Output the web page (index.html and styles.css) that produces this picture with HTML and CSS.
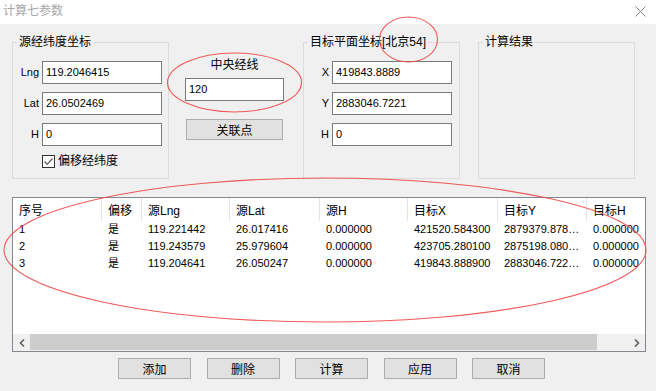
FILE: index.html
```html
<!DOCTYPE html>
<html lang="zh-CN">
<head>
  <meta charset="UTF-8" />
  <meta name="viewport" content="width=device-width, initial-scale=1.0" />
  <title>计算七参数</title>
  <link rel="stylesheet" href="styles.css">
</head>
<body>
  <div class="window">
    <div class="titlebar">
      <span class="title">计算七参数</span>
      <svg class="close" width="11" height="11" viewBox="0 0 11 11">
        <path d="M0.5 0.5 L10.5 10.5 M10.5 0.5 L0.5 10.5" stroke="#858585" stroke-width="1" fill="none" />
      </svg>
    </div>

    <div class="content">
      <div class="top">
        <fieldset class="group">
          <legend>源经纬度坐标</legend>
          <div class="form src">
            <label>Lng</label><input class="field" value="119.2046415" />
            <label>Lat</label><input class="field" value="26.0502469" />
            <label>H</label><input class="field" value="0" />
          </div>
          <div class="check">
            <span class="box">
              <svg width="11" height="11" viewBox="0 0 11 11">
                <path d="M1.5 5.5 L4.2 8.2 L9.5 2.5" stroke="#6a6a6a" stroke-width="1.4" fill="none" />
              </svg>
            </span>
            <span>偏移经纬度</span>
          </div>
        </fieldset>

        <div class="meridian">
          <div class="meridian-title">中央经线</div>
          <input class="field" value="120" />
          <button class="btn link">关联点</button>
        </div>

        <fieldset class="group dst-group">
          <legend>目标平面坐标[北京54]</legend>
          <div class="form dst">
            <label>X</label><input class="field" value="419843.8889" />
            <label>Y</label><input class="field" value="2883046.7221" />
            <label>H</label><input class="field" value="0" />
          </div>
        </fieldset>

        <fieldset class="group result-group">
          <legend>计算结果</legend>
        </fieldset>
      </div>

      <div class="list">
        <div class="list-body">
          <table>
            <colgroup>
              <col style="width:89px"><col style="width:40px"><col style="width:88px"><col style="width:90px">
              <col style="width:88px"><col style="width:90px"><col style="width:89px"><col style="width:90px">
            </colgroup>
            <thead>
              <tr>
                <th>序号</th><th>偏移</th><th>源Lng</th><th>源Lat</th>
                <th>源H</th><th>目标X</th><th>目标Y</th><th>目标H</th>
              </tr>
            </thead>
            <tbody id="rows"></tbody>
          </table>
        </div>
        <div class="hscroll">
          <span class="arrow">
            <svg width="6" height="8" viewBox="0 0 6 8"><path d="M5 0.5 L1.5 4 L5 7.5" stroke="#606060" stroke-width="1.6" fill="none" /></svg>
          </span>
          <span class="thumb"></span>
          <span class="track"></span>
          <span class="arrow">
            <svg width="6" height="8" viewBox="0 0 6 8"><path d="M1 0.5 L4.5 4 L1 7.5" stroke="#606060" stroke-width="1.6" fill="none" /></svg>
          </span>
        </div>
      </div>

      <div class="actions">
        <button class="btn">添加</button>
        <button class="btn">删除</button>
        <button class="btn">计算</button>
        <button class="btn">应用</button>
        <button class="btn">取消</button>
      </div>
    </div>

    <svg class="marks" width="656" height="391" viewBox="0 0 656 391">
      <ellipse cx="234.5" cy="82.5" rx="67" ry="29.5" />
      <ellipse cx="408.5" cy="39.5" rx="29" ry="22.5" />
      <ellipse cx="325" cy="250" rx="321" ry="72" />
    </svg>
  </div>

  <script>
    const points = [
      ["1", "是", "119.221442", "26.017416", "0.000000", "421520.584300", "2879379.878300", "0.000000"],
      ["2", "是", "119.243579", "25.979604", "0.000000", "423705.280100", "2875198.080300", "0.000000"],
      ["3", "是", "119.204641", "26.050247", "0.000000", "419843.888900", "2883046.722100", "0.000000"]
    ];

    const tbody = document.getElementById('rows');
    points.forEach(p => {
      const tr = document.createElement('tr');
      tr.innerHTML = p.map(v => `<td>${v}</td>`).join('');
      tbody.appendChild(tr);
    });
  </script>
</body>
</html>
```

FILE: styles.css
```css
* {
  box-sizing: border-box;
}
body {
  margin: 0;
  background: #f0f0f0;
  font-family: "Liberation Sans", "Noto Sans CJK SC", sans-serif;
  font-size: 12px;
  color: #000;
}
.window {
  position: relative;
  width: 656px;
  height: 391px;
  overflow: hidden;
  background: #f0f0f0;
}
.titlebar {
  height: 24px;
  background: #fff;
  display: flex;
  align-items: center;
  justify-content: space-between;
  padding: 0 10px 2px 3px;
}
.title {
  color: #a6a6a6;
  font-size: 12px;
  line-height: 16px;
}
.content {
  padding: 10px 12px 0 12px;
}
.top {
  display: flex;
  align-items: flex-start;
}
.group {
  margin: 0;
  padding: 0;
  min-width: 0;
  width: 157px;
  height: 145px;
  border: 1px solid #dcdcdc;
}
.group legend {
  margin-left: 4px;
  padding: 0 2px;
  font-size: 12px;
  line-height: 16px;
}
.form {
  display: grid;
  grid-template-columns: 26px 120px;
  column-gap: 3px;
  row-gap: 8px;
  margin-top: 11px;
}
.form.dst {
  grid-template-columns: 25px 120px;
}
.form label {
  text-align: right;
  font-size: 11px;
  line-height: 23px;
}
.field {
  width: 120px;
  height: 23px;
  margin: 0;
  padding: 0 3px 1px 3px;
  border: 1px solid #7a7a7a;
  background: #fff;
  font-family: "Liberation Sans", sans-serif;
  font-size: 11px;
  color: #000;
  outline: none;
}
.check {
  display: flex;
  align-items: center;
  margin: 9px 0 0 29px;
  line-height: 13px;
}
.box {
  width: 13px;
  height: 13px;
  border: 1px solid #333;
  background: #fff;
  margin-right: 3px;
  display: flex;
}
.meridian {
  width: 99px;
  margin-left: 16px;
  padding-top: 23px;
  display: flex;
  flex-direction: column;
}
.meridian-title {
  text-align: center;
  line-height: 16px;
}
.meridian .field {
  width: 99px;
  margin-top: 5px;
}
.btn {
  width: 73px;
  height: 21px;
  padding: 0;
  border: 1px solid #adadad;
  background: #e1e1e1;
  font-family: "Noto Sans CJK SC", sans-serif;
  font-size: 12px;
  line-height: 18px;
  color: #000;
}
.btn.link {
  width: 97px;
  margin: 18px 0 0 1px;
}
.dst-group {
  margin-left: 19px;
}
.result-group {
  margin-left: 18px;
}
.list {
  margin-top: 18px;
  width: 634px;
  height: 155px;
  border: 1px solid #828790;
  background: #fff;
}
.list-body {
  height: 136px;
  overflow: hidden;
}
table {
  border-collapse: separate;
  border-spacing: 0;
  table-layout: fixed;
  width: 664px;
}
th {
  height: 23px;
  padding: 0 4px 0 6px;
  text-align: left;
  font-weight: normal;
  font-size: 12px;
  border-right: 1px solid #e5e5e5;
  white-space: nowrap;
  overflow: hidden;
}
td {
  height: 17px;
  padding: 0 4px 0 6px;
  font-size: 11px;
  line-height: 17px;
  white-space: nowrap;
  overflow: hidden;
  text-overflow: ellipsis;
}
.hscroll {
  height: 17px;
  display: flex;
  background: #f0f0f0;
}
.arrow {
  width: 17px;
  display: flex;
  align-items: center;
  justify-content: center;
}
.thumb {
  width: 567px;
  background: #cdcdcd;
  margin-bottom: 1px;
}
.track {
  flex: 1;
}
.actions {
  display: flex;
  gap: 15.5px;
  margin-top: 6px;
  padding-left: 106px;
}
.marks {
  position: absolute;
  top: 0;
  left: 0;
  pointer-events: none;
}
.marks ellipse {
  fill: none;
  stroke: #f04848;
  stroke-width: 1.1;
  opacity: 0.9;
}
```
